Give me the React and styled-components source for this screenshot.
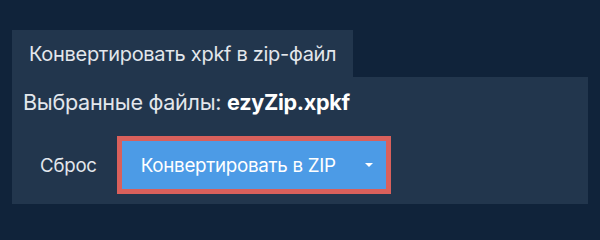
import React from 'react';
import styled, { createGlobalStyle } from 'styled-components';

const GlobalStyle = createGlobalStyle`
  html, body {
    margin: 0;
    padding: 0;
    background: #10233a;
    font-family: Inter, "Noto Sans", sans-serif;
  }
`

const Page = styled.div`
  width: 600px;
  height: 230px;
  box-sizing: border-box;
  padding: 30px 12px 0;
  background: #10233a;
`

const Tab = styled.div`
  display: inline-flex;
  align-items: center;
  height: 47px;
  padding: 0 17px;
  background: #22364d;
  color: #e3e7ec;
  font-size: 20px;
  letter-spacing: -0.3px;
`

const Panel = styled.div`
  background: #22364d;
  padding: 11px 11px 10px;
`

const Selected = styled.div`
  color: #e3e7ec;
  font-size: 21.6px;
  line-height: 28px;
  letter-spacing: -0.3px;

  b {
    color: #ffffff;
    font-weight: 700;
  }
`

const Actions = styled.div`
  display: flex;
  align-items: center;
  gap: 20px;
  margin-top: 20px;
  padding-left: 17px;
`

const ResetButton = styled.button`
  background: none;
  border: none;
  padding: 0;
  color: #e3e7ec;
  font-family: inherit;
  font-size: 18.6px;
  letter-spacing: -0.2px;
  cursor: pointer;
`

const ConvertButton = styled.button`
  display: flex;
  align-items: center;
  justify-content: space-between;
  width: 274px;
  height: 58px;
  box-sizing: border-box;
  padding: 0 13px 0 19px;
  background: #4c9be6;
  border: 5px solid #d9605b;
  color: #ffffff;
  font-family: inherit;
  font-size: 18.8px;
  letter-spacing: -0.3px;
  cursor: pointer;
`

const Caret = styled.span`
  width: 0;
  height: 0;
  border-left: 4px solid transparent;
  border-right: 4px solid transparent;
  border-top: 4px solid #ffffff;
`

export default function App() {
  return (
    <>
      <GlobalStyle />
      <Page>
        <Tab>Конвертировать xpkf в zip-файл</Tab>
        <Panel>
          <Selected>
            Выбранные файлы: <b>ezyZip.xpkf</b>
          </Selected>
          <Actions>
            <ResetButton>Сброс</ResetButton>
            <ConvertButton>
              Конвертировать в ZIP
              <Caret />
            </ConvertButton>
          </Actions>
        </Panel>
      </Page>
    </>
  );
}
